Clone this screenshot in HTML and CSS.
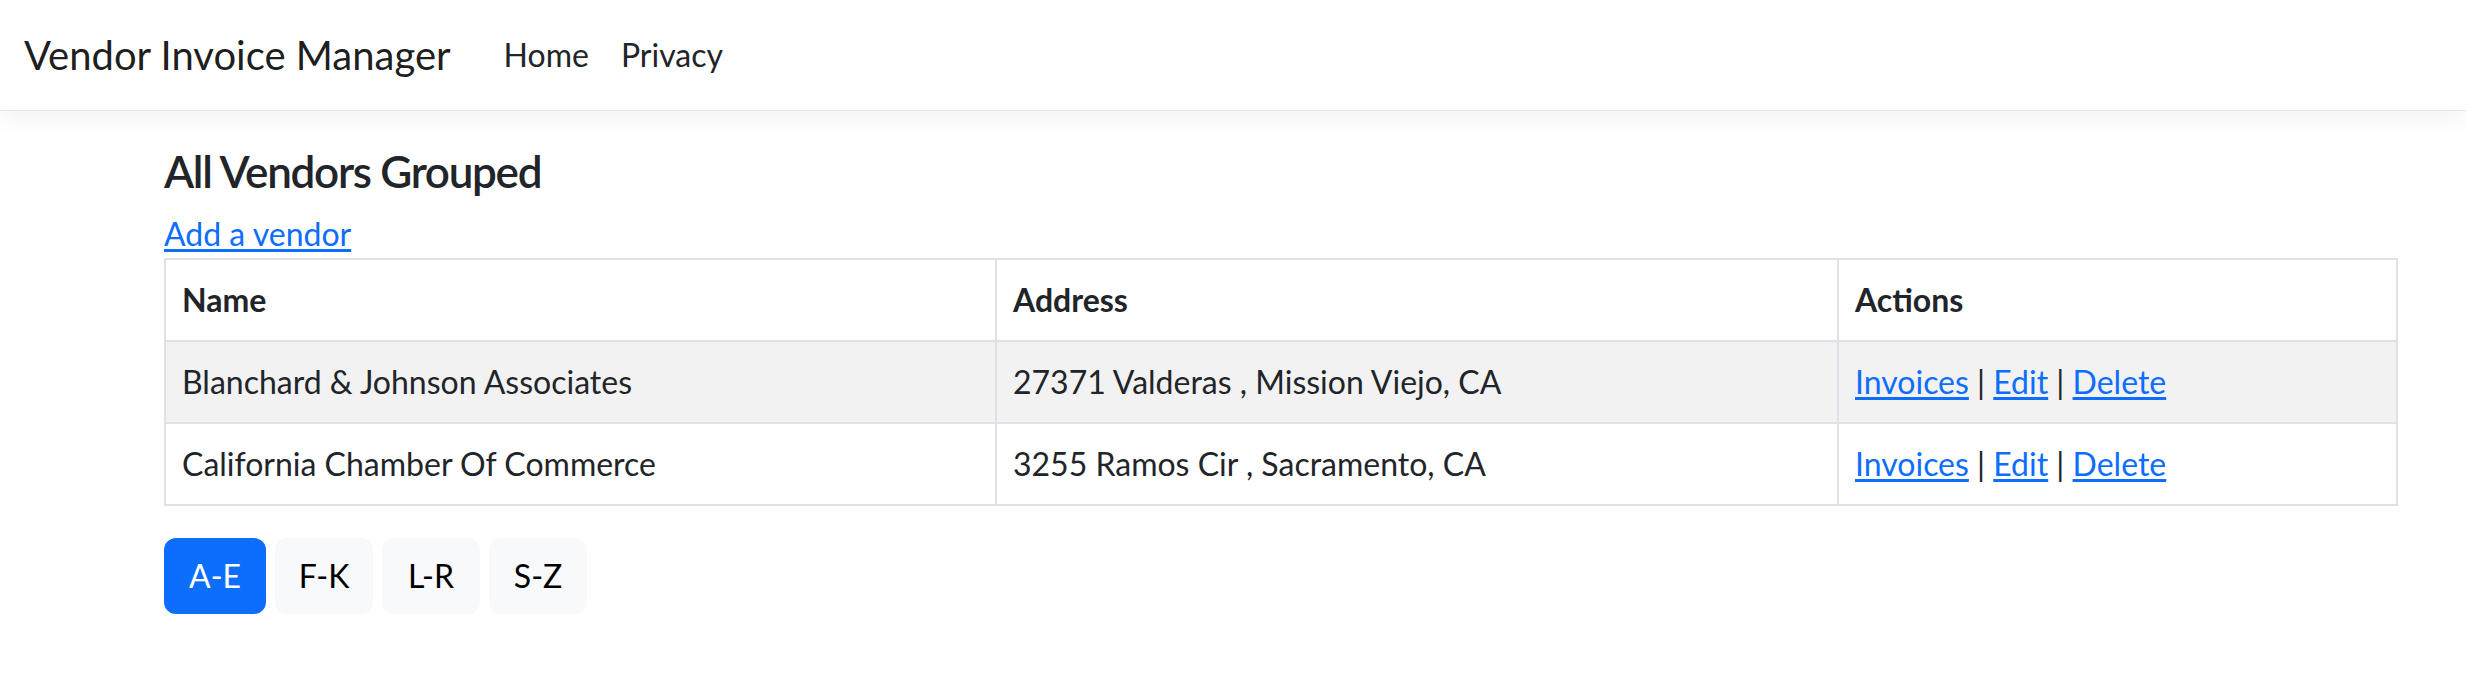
FILE: index.html
```html
<!DOCTYPE html>
<html lang="en">
<head>
<meta charset="utf-8">
<title>Vendor Invoice Manager</title>
<link rel="stylesheet" href="styles.css">
</head>
<body>
<header class="navbar">
  <a class="brand" href="#">Vendor Invoice Manager</a>
  <nav class="nav">
    <a class="nav-link" href="#">Home</a>
    <a class="nav-link" href="#">Privacy</a>
  </nav>
</header>
<main class="container">
  <h4 class="page-title">All Vendors Grouped</h4>
  <a class="add-link" href="#">Add a vendor</a>
  <table class="vendors">
    <thead>
      <tr>
        <th class="col-name">Name</th>
        <th class="col-address">Address</th>
        <th class="col-actions">Actions</th>
      </tr>
    </thead>
    <tbody>
      <tr class="striped">
        <td>Blanchard &amp; Johnson Associates</td>
        <td>27371 Valderas , Mission Viejo, CA</td>
        <td><a href="#">Invoices</a> | <a href="#">Edit</a> | <a href="#">Delete</a></td>
      </tr>
      <tr>
        <td>California Chamber Of Commerce</td>
        <td>3255 Ramos Cir , Sacramento, CA</td>
        <td><a href="#">Invoices</a> | <a href="#">Edit</a> | <a href="#">Delete</a></td>
      </tr>
    </tbody>
  </table>
  <div class="groups">
    <a class="btn btn-primary" href="#">A-E</a>
    <a class="btn btn-light" href="#">F-K</a>
    <a class="btn btn-light" href="#">L-R</a>
    <a class="btn btn-light" href="#">S-Z</a>
  </div>
</main>
</body>
</html>
```
FILE: styles.css
```css
html, body {
  margin: 0;
  padding: 0;
  background: #ffffff;
}

body {
  font-family: Lato, "Noto Sans", sans-serif;
  font-size: 32px;
  line-height: 1.5;
  color: #212529;
}

a {
  color: #0d6efd;
  text-decoration: underline;
  text-underline-offset: 3px;
}

.navbar {
  display: flex;
  align-items: center;
  height: 110px;
  padding: 0 24px;
  border-bottom: 1px solid #e3e5e8;
  box-shadow: 0 8px 24px rgba(0, 0, 0, 0.05);
  background: #ffffff;
}

.brand {
  font-size: 40px;
  line-height: 60px;
  color: rgba(0, 0, 0, 0.9);
  text-decoration: none;
  margin-right: 37px;
}

.nav {
  display: flex;
}

.nav-link {
  padding: 0 16px;
  line-height: 48px;
  color: #212529;
  text-decoration: none;
}

.container {
  padding: 0 0 32px 164px;
  width: 2234px;
}

.page-title {
  margin: 32px 0 9px;
  font-size: 44px;
  line-height: 57.6px;
  font-weight: 600;
  letter-spacing: -1.3px;
}

.add-link {
  display: inline-block;
  line-height: 48px;
  margin-bottom: 0;
}

.vendors {
  width: 2234px;
  border-collapse: collapse;
  border: 2px solid #dee2e6;
  margin-bottom: 32px;
}

.vendors th,
.vendors td {
  border: 2px solid #dee2e6;
  padding: 16px 16px;
  text-align: left;
  vertical-align: top;
  line-height: 48px;
}

.vendors th {
  font-weight: 700;
}

.col-name { width: 797px; }
.col-address { width: 808px; }

.striped td {
  background: #f2f2f2;
}

.groups {
  display: flex;
  gap: 9px;
}

.btn {
  display: inline-block;
  box-sizing: border-box;
  width: 98px;
  padding: 12px 0;
  border: 2px solid transparent;
  border-radius: 12px;
  text-align: center;
  text-decoration: none;
  line-height: 48px;
  font-size: 32px;
}

.btn-primary {
  width: 102px;
  background: #0d6efd;
  border-color: #0d6efd;
  color: #ffffff;
}

.btn-light {
  background: #f8f9fa;
  border-color: #f8f9fa;
  color: #000000;
}
```
